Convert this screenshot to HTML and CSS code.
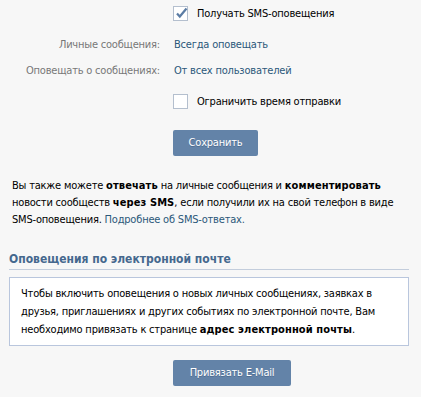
FILE: index.html
```html
<!DOCTYPE html>
<html>
<head lang="ru">
    <meta charset="UTF-8">
    <title>Оповещения</title>
    <link rel="stylesheet" href="styles.css">
</head>
<body>
<div class="page">
    <div class="row row-first">
        <div class="label"></div>
        <div class="value">
            <span class="check checked">
                <svg width="14" height="14" viewBox="0 0 14 14"><path d="M3 7.5 L5.8 10.5 L12.5 2.5" fill="none" stroke="#5b7ca4" stroke-width="2.2"/></svg>
            </span>
            <span class="check-text">Получать SMS-оповещения</span>
        </div>
    </div>
    <div class="row row-second">
        <div class="label">Личные сообщения:</div>
        <div class="value link">Всегда оповещать</div>
    </div>
    <div class="row">
        <div class="label">Оповещать о сообщениях:</div>
        <div class="value link">От всех пользователей</div>
    </div>
    <div class="row row-fourth">
        <div class="label"></div>
        <div class="value">
            <span class="check"></span>
            <span class="check-text">Ограничить время отправки</span>
        </div>
    </div>
    <div class="buttons">
        <div class="button save">Сохранить</div>
    </div>

    <p class="info">
        Вы также можете <b>отвечать</b> на личные сообщения и <b>комментировать</b>
        новости сообществ <b>через SMS</b>, если получили их на свой телефон в виде
        SMS-оповещения. <a href="#">Подробнее об SMS-ответах.</a>
    </p>

    <div class="section">
        <h2 class="header">Оповещения по электронной почте</h2>
        <div class="notice">
            Чтобы включить оповещения о новых личных сообщениях, заявках в
            друзья, приглашениях и других событиях по электронной почте, Вам
            необходимо привязать к странице <b>адрес электронной почты</b>.
        </div>
        <div class="buttons buttons-mail">
            <div class="button mail">Привязать E-Mail</div>
        </div>
    </div>
</div>
</body>
</html>
```

FILE: styles.css
```css
* {
    margin: 0;
    padding: 0;
}

body {
    background-color: #f7f7f7;
    font-family: "DejaVu Sans Condensed", "DejaVu Sans", sans-serif;
    font-size: 11px;
    letter-spacing: -0.2px;
    color: #000;
}

b {
    letter-spacing: 0.1px;
}

.page {
    width: 421px;
}

.row {
    display: flex;
    align-items: center;
    height: 26px;
}

.row-first {
    height: 27px;
}

.row-second {
    margin-top: 4px;
}

.row-fourth {
    margin-top: 5px;
}

.label {
    width: 160px;
    text-align: right;
    color: #777;
    margin-right: 14px;
}

.value {
    display: flex;
    align-items: center;
}

.link {
    color: #2b587a;
}

.check {
    display: inline-block;
    width: 13px;
    height: 13px;
    border: 1px solid #b4bfce;
    background-color: #fff;
    margin-left: -1px;
    margin-right: 9px;
    position: relative;
}

.check svg {
    position: absolute;
    left: 0;
    top: -1px;
}

.buttons {
    padding-left: 173px;
    margin-top: 16px;
}

.button {
    display: inline-block;
    background-color: #6383a8;
    color: #fff;
    border-radius: 2px;
    height: 26px;
    line-height: 26px;
    text-align: center;
    text-shadow: 0 1px 0 #4f6d91;
}

.save {
    width: 85px;
}

.mail {
    width: 118px;
}

.info {
    margin: 21px 0 0 12px;
    line-height: 17px;
    width: 400px;
}

.info a {
    color: #2b587a;
    text-decoration: none;
}

.section {
    margin: 24px 12px 0 9px;
}

.header {
    font-size: 12px;
    font-weight: bold;
    letter-spacing: 0;
    color: #45688e;
    border-bottom: 1px solid #c3cddc;
    padding-bottom: 2px;
    line-height: 15px;
}

.notice {
    margin-top: 7px;
    background-color: #fff;
    border: 1px solid #b9c6dd;
    padding: 7px 11px 6px;
    line-height: 18px;
}

.buttons-mail {
    margin-top: 14px;
    padding-left: 164px;
}
```
